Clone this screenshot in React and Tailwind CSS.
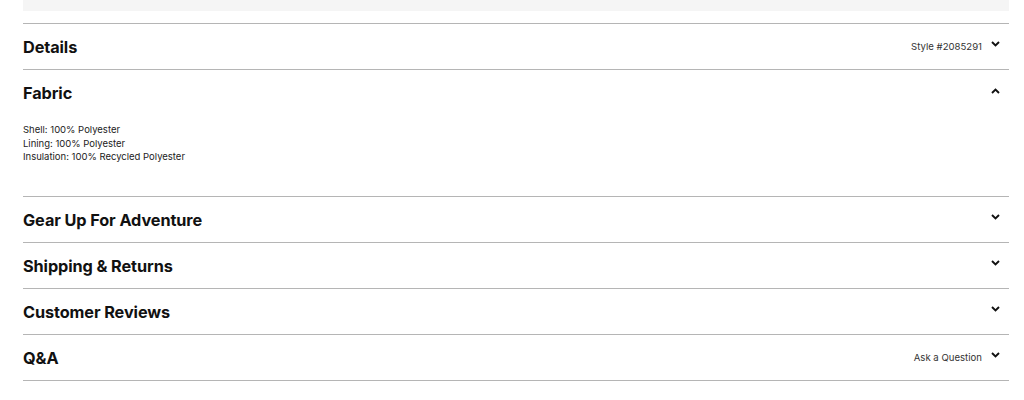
import React from "react"

function Chevron({ up }) {
  return (
    <svg width="9" height="6" viewBox="0 0 9 6" className="mb-[6px] shrink-0">
      <path
        d={up ? "M1 5 L4.5 1.5 L8 5" : "M1 1 L4.5 4.5 L8 1"}
        fill="none"
        stroke="#111"
        strokeWidth="1.9"
      />
    </svg>
  )
}

function Row({ title, extra, open, children }) {
  return (
    <div className="border-b border-[#b5b5b5]">
      <div className="flex h-[45px] items-center justify-between pt-[2px]">
        <h3 className="text-[16.3px] font-bold tracking-[-0.1px] text-[#111]">{title}</h3>
        <div className="flex items-center gap-[9px] pr-[9px]">
          {extra && <span className="text-[9.6px] text-[#333]">{extra}</span>}
          <Chevron up={open} />
        </div>
      </div>
      {children}
    </div>
  )
}

export default function App() {
  return (
    <div className="bg-white pl-[23px] pr-[15px] font-['Inter',sans-serif]">
      <div className="h-[11px] bg-[#f5f5f5]"></div>
      <div className="mt-[12px] border-t border-[#b5b5b5]">
        <Row title="Details" extra="Style #2085291" />
        <Row title="Fabric" open>
          <div className="pt-[8px] pb-[32px] text-[9.5px] leading-[13.5px] text-[#222]">
            <p>Shell: 100% Polyester</p>
            <p>Lining: 100% Polyester</p>
            <p>Insulation: 100% Recycled Polyester</p>
          </div>
        </Row>
        <Row title="Gear Up For Adventure" />
        <Row title="Shipping &amp; Returns" />
        <Row title="Customer Reviews" />
        <Row title="Q&amp;A" extra="Ask a Question" />
      </div>
    </div>
  )
}
